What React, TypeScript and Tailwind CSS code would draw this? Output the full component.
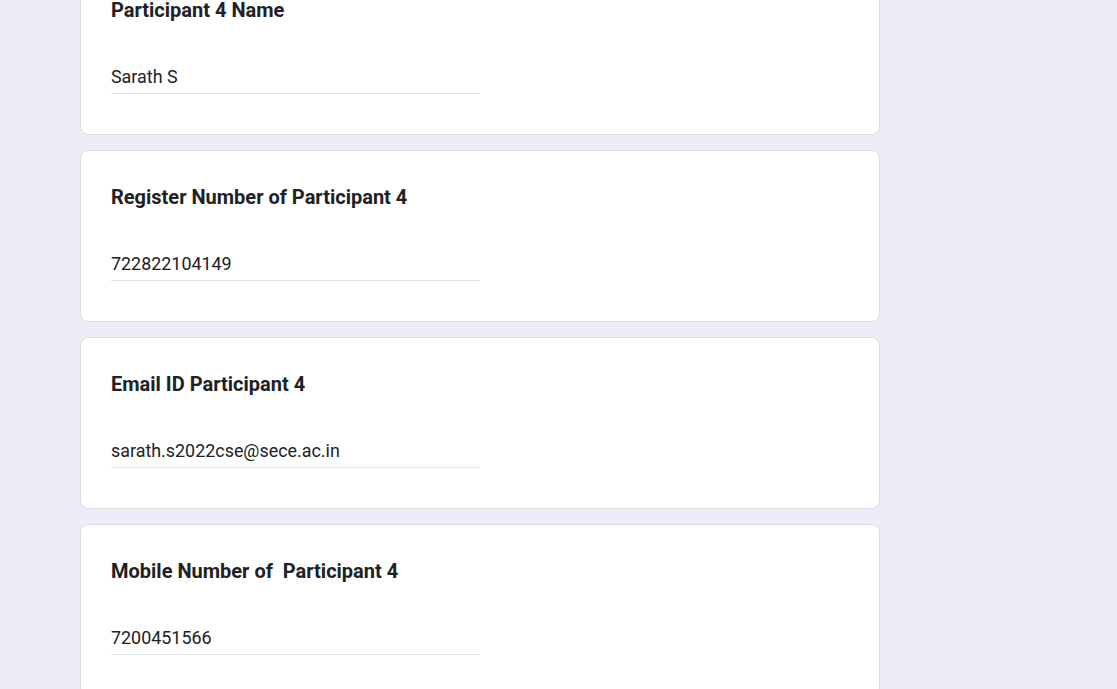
const questions = [
  { title: "Participant 4 Name", value: "Sarath S" },
  { title: "Register Number of Participant 4", value: "722822104149" },
  { title: "Email ID Participant 4", value: "sarath.s2022cse@sece.ac.in" },
  { title: "Mobile Number of  Participant 4", value: "7200451566" },
];

export default function App() {
  return (
    <main
      className="min-h-screen h-[689px] overflow-hidden bg-[#f0ebf8] text-[#202124]"
      style={{ fontFamily: "Roboto, 'Noto Sans', sans-serif" }}
    >
      <div className="w-[800px] ml-[80px] -mt-[37px] flex flex-col gap-[15px]">
        {questions.map((q) => (
          <div
            key={q.title}
            className="h-[172px] bg-white border border-[#dadce0] rounded-lg pl-[30px] pt-[34px]"
          >
            <div className="text-[20px] leading-6 font-bold whitespace-pre">{q.title}</div>
            <div className="mt-[40px] w-[369px] h-8 flex items-center border-b border-[#e0e0e0] text-[17.9px]">
              {q.value}
            </div>
          </div>
        ))}
      </div>
    </main>
  );
}
